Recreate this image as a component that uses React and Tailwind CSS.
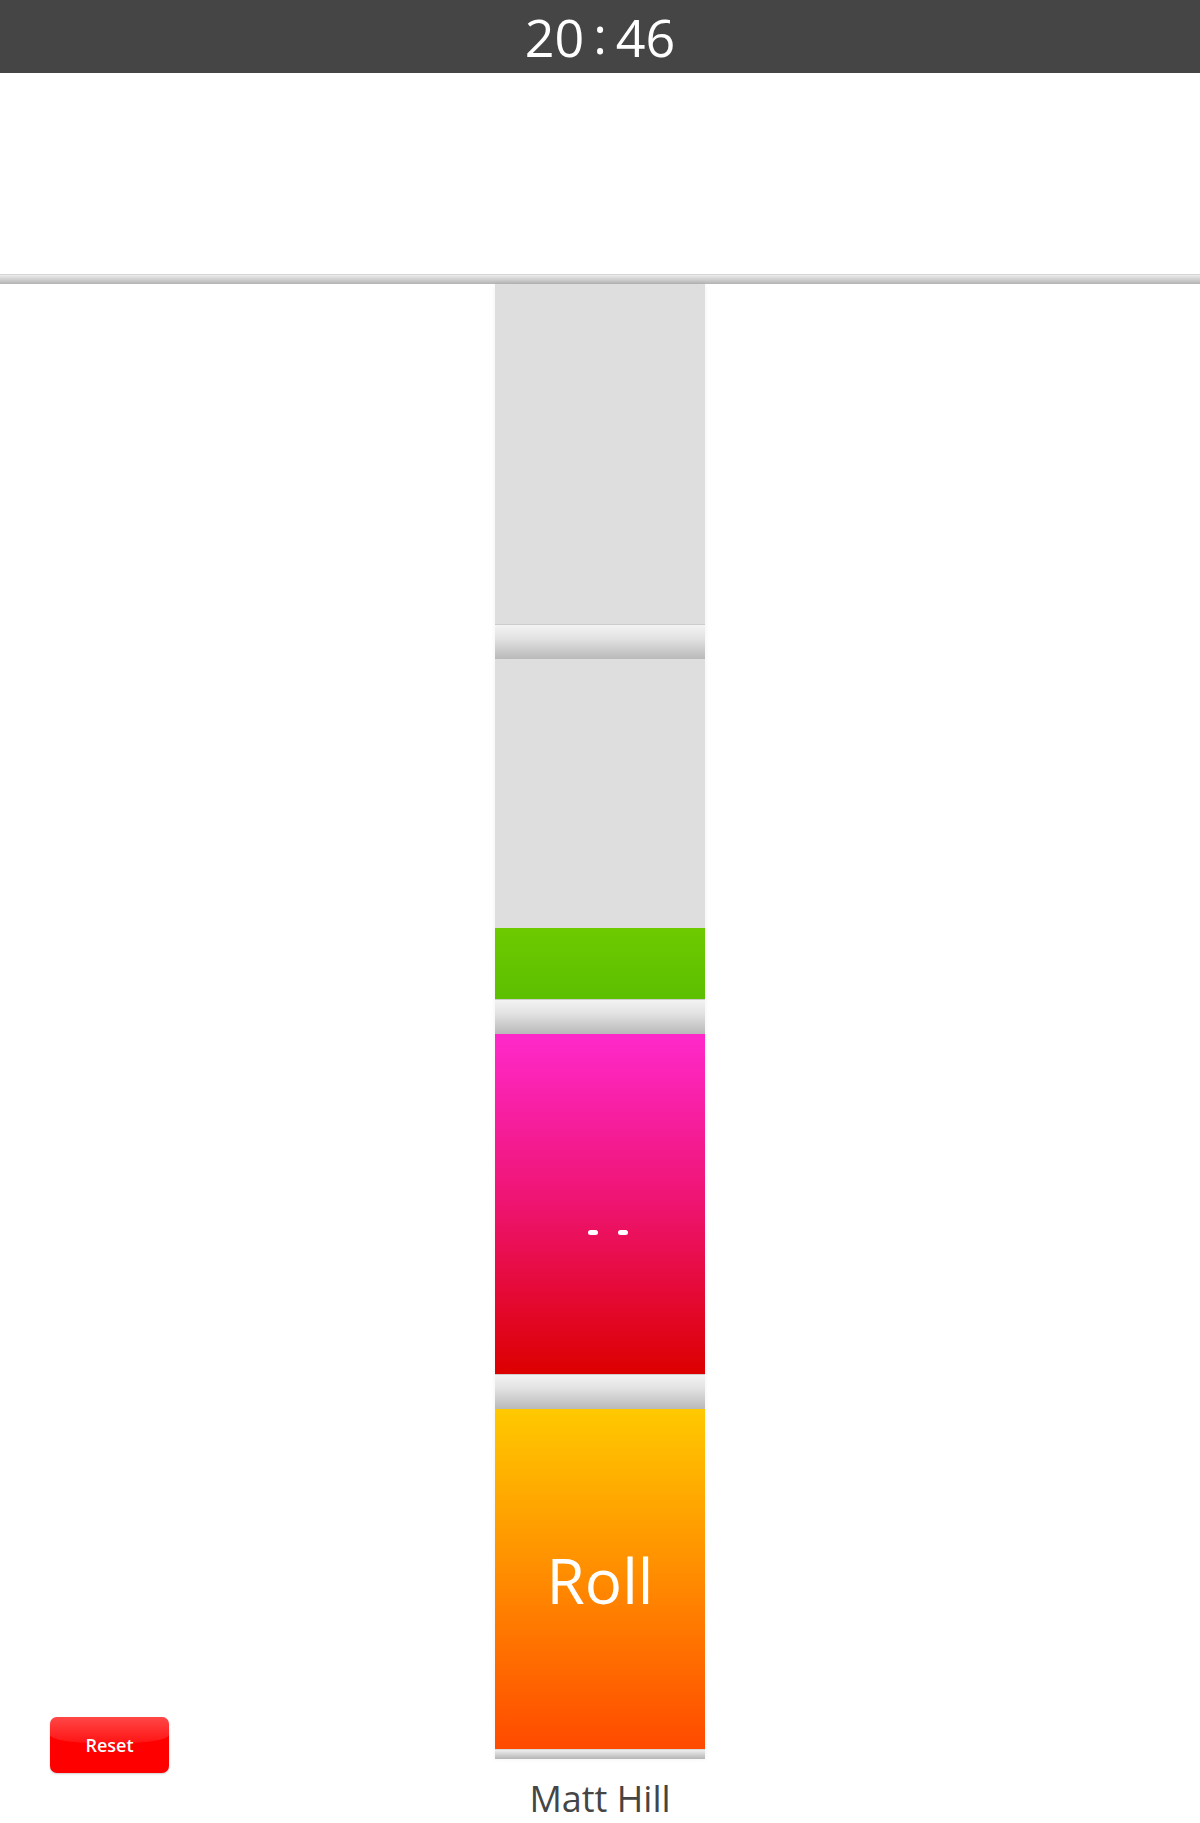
export default function App() {
  const sep = "h-[35px] border-t border-[#cdcdcd] bg-[linear-gradient(#f3f3f3,#e2e2e2_40%,#b9b9b9)]";
  return (
    <div className="w-[1200px] min-h-[1823px] bg-white flex flex-col" style={{ fontFamily: '"Open Sans", sans-serif' }}>
      <div className="h-[73px] bg-[#454545] flex items-center justify-center text-white text-[52px] font-normal leading-none" style={{ fontFamily: '"Open Sans", sans-serif' }}>
        <span>20</span>
        <span className="mx-[9px] relative -top-[3px]">:</span>
        <span>46</span>
      </div>
      <div className="h-[201px]" />
      <div className="h-[10px] border-t border-[#d6d6d6] bg-[linear-gradient(#ececec,#b3b3b3)]" />
      <div className="flex-1 grid grid-cols-[1fr_210px_1fr]">
        <div className="flex flex-col justify-end pl-[50px] pb-[50px]">
          <button className="relative w-[119px] h-[56px] rounded-[7px] bg-[#ff0000] overflow-hidden shadow-[0_1px_2px_rgba(0,0,0,0.2)] flex items-center justify-center">
            <span className="absolute left-0 right-0 top-0 h-[26px] bg-[linear-gradient(rgba(255,255,255,0.28),rgba(255,255,255,0.08))] rounded-b-[40%_8px]" />
            <span className="relative text-white text-[18px] font-semibold leading-none" style={{ fontFamily: '"Open Sans", sans-serif' }}>Reset</span>
          </button>
        </div>
        <div className="flex flex-col">
          <div className="flex flex-col shadow-[0_0_5px_rgba(0,0,0,0.06)]">
            <div className="h-[340px] bg-[#dedede]" />
            <div className={sep} />
            <div className="h-[340px] bg-[#dedede] flex flex-col justify-end">
              <div className="h-[71px] bg-[linear-gradient(#6dca00,#5cbf00)]" />
            </div>
            <div className={sep} />
            <div className="h-[340px] bg-[linear-gradient(#ff29cb,#ee1470_50%,#dc0000)] flex justify-center pt-[196px] pl-[15px] gap-[20px]">
              <span className="w-[10px] h-[5px] rounded-[3px] bg-white" />
              <span className="w-[10px] h-[5px] rounded-[3px] bg-white" />
            </div>
            <div className={sep} />
            <div className="h-[340px] bg-[linear-gradient(#ffc900,#ff8b00_50%,#ff4a00)] flex items-center justify-center">
              <span className="text-white text-[62px] font-normal leading-none relative top-[1px]" style={{ fontFamily: '"Open Sans", sans-serif' }}>Roll</span>
            </div>
            <div className="h-[10px] border-t border-[#d9d9d9] bg-[linear-gradient(#eeeeee,#b5b5b5)]" />
          </div>
          <div className="mt-[15px] text-center text-[#454545] text-[36px] leading-[49px] whitespace-nowrap">Matt Hill</div>
        </div>
        <div />
      </div>
    </div>
  );
}
